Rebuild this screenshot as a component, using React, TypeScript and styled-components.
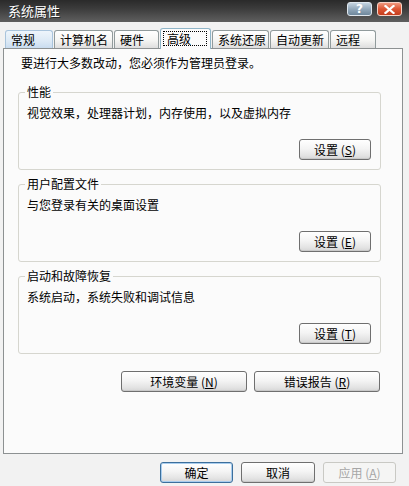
import * as React from "react";
import styled, { createGlobalStyle } from "styled-components";

const GlobalStyle = createGlobalStyle`
  html, body {
    margin: 0;
    padding: 0;
    background: #f2f2f2;
  }
  body {
    font-family: "Noto Sans CJK SC", "Noto Sans", sans-serif;
    font-size: 12px;
    color: #000;
  }
`;

const Window = styled.div`
  width: 409px;
  height: 486px;
  display: flex;
  flex-direction: column;
  background: #f2f2f2;
  overflow: hidden;
`;

const TitleBar = styled.div`
  height: 22px;
  flex: none;
  display: flex;
  align-items: center;
  padding: 0 7px 0 8px;
  background: linear-gradient(#2a2a2a, #3c3c3c 40%, #5f5f5f);
  color: #fff;
  font-size: 13px;
`;

const Title = styled.span`
  flex: 1;
  line-height: 22px;
  text-shadow: 1px 1px 0 rgba(0, 0, 0, 0.5);
`;

const CaptionButtons = styled.div`
  display: flex;
  gap: 5px;
  margin-top: -4px;
`;

const CaptionButton = styled.div<{ $close?: boolean }>`
  width: 25px;
  height: 14px;
  box-sizing: border-box;
  border-radius: 3px;
  border: 1px solid ${(p) => (p.$close ? "#f6d2c6" : "#dfe7ee")};
  background: ${(p) =>
    p.$close
      ? "linear-gradient(#f0997f, #dd5533 50%, #c43d1d)"
      : "linear-gradient(#c4d3df, #93a9bb 50%, #6f889c)"};
  display: flex;
  align-items: center;
  justify-content: center;
  color: #fff;
  font-family: "DejaVu Sans", sans-serif;
  font-weight: bold;
  font-size: 12px;
  line-height: 12px;
`;

const Body = styled.div`
  padding: 0 6px 0 3px;
  display: flex;
  flex-direction: column;
`;

const Tabs = styled.div`
  display: flex;
  align-items: flex-end;
  height: 21px;
  margin: 6px 0 -1px 2px;
  position: relative;
  z-index: 1;
`;

const Tab = styled.div<{ $w: number; $active?: boolean; $hot?: boolean }>`
  width: ${(p) => p.$w}px;
  box-sizing: border-box;
  height: ${(p) => (p.$active ? 21 : 18)}px;
  margin-bottom: ${(p) => (p.$active ? 0 : 1)}px;
  margin-right: 1px;
  padding: ${(p) => (p.$active ? "2px 3px 3px 2px" : "0 0 0 5px")};
  display: flex;
  align-items: center;
  border: 1px solid ${(p) => (p.$active ? "#8fb5c8" : p.$hot ? "#a9c4dc" : "#919b9c")};
  border-bottom: none;
  border-radius: 3px 3px 0 0;
  background: ${(p) =>
    p.$active
      ? "#fbfbfb"
      : p.$hot
      ? "linear-gradient(#eef5fb, #dce9f5 60%, #c9dcef)"
      : "linear-gradient(#ffffff, #f5f5f3 55%, #dedede)"};
  line-height: 14px;
  white-space: nowrap;
`;

const FocusLabel = styled.span`
  flex: 1;
  height: 100%;
  box-sizing: border-box;
  border: 1px dotted #000;
  padding-left: 3px;
  display: flex;
  align-items: center;
`;

const Panel = styled.div`
  width: 400px;
  height: 406px;
  box-sizing: border-box;
  border: 1px solid #8d9192;
  background: #fbfbfb;
  padding: 7px 21px 0 14px;
  display: flex;
  flex-direction: column;
`;

const Intro = styled.div`
  margin-left: 3px;
  line-height: 14px;
`;

const Group = styled.div<{ $first?: boolean }>`
  position: relative;
  height: 78px;
  flex: none;
  box-sizing: border-box;
  margin-top: ${(p) => (p.$first ? 22 : 14)}px;
  border: 1px solid #d6d6cf;
  border-radius: 3px;
  padding: 13px 9px 9px 8px;
  display: flex;
  flex-direction: column;
`;

const GroupLabel = styled.span`
  position: absolute;
  top: -8px;
  left: 6px;
  padding: 0 2px;
  background: #fbfbfb;
  line-height: 14px;
`;

const GroupText = styled.div`
  line-height: 14px;
`;

const GroupActions = styled.div`
  margin-top: auto;
  display: flex;
  justify-content: flex-end;
`;

const Button = styled.button<{ $w: number; $default?: boolean }>`
  width: ${(p) => p.$w}px;
  height: 21px;
  box-sizing: border-box;
  padding: 0;
  border: 1px solid ${(p) => (p.$default ? "#3c6f9c" : "#6f6f6f")};
  border-radius: 3px;
  background: linear-gradient(#ffffff, #f4f4f4 45%, #e4e4e4 80%, #d6d6d6);
  box-shadow: ${(p) => (p.$default ? "inset 0 0 0 1px #a9cdee" : "inset 0 -1px 0 #c9c9c9")};
  font-family: inherit;
  font-size: 12px;
  line-height: 14px;
  color: #000;

  &:disabled {
    border-color: #c9c9c4;
    background: #f5f5f4;
    box-shadow: none;
    color: #a6a6a6;
  }
`;

const EnvRow = styled.div`
  margin-top: 17px;
  display: flex;
  justify-content: flex-end;
  gap: 7px;
  padding-right: 1px;
`;

const Footer = styled.div`
  display: flex;
  justify-content: flex-end;
  gap: 8px;
  padding: 8px 7px 0 0;
`;

const CloseGlyph = () => (
  <svg width="11" height="9" viewBox="0 0 11 9">
    <path d="M1.5 1 L9.5 8 M9.5 1 L1.5 8" stroke="#fff" strokeWidth="2.2" strokeLinecap="square" />
  </svg>
);

const tabs = [
  { label: "常规", w: 48, hot: true },
  { label: "计算机名", w: 59 },
  { label: "硬件", w: 45 },
  { label: "高级", w: 51, active: true },
  { label: "系统还原", w: 57 },
  { label: "自动更新", w: 59 },
  { label: "远程", w: 46 },
];

const groups = [
  { title: "性能", text: "视觉效果，处理器计划，内存使用，以及虚拟内存", key: "S" },
  { title: "用户配置文件", text: "与您登录有关的桌面设置", key: "E" },
  { title: "启动和故障恢复", text: "系统启动，系统失败和调试信息", key: "T" },
];

const App: React.FunctionComponent = () => {
  return (
    <Window>
      <GlobalStyle />
      <TitleBar>
        <Title>系统属性</Title>
        <CaptionButtons>
          <CaptionButton>?</CaptionButton>
          <CaptionButton $close>
            <CloseGlyph />
          </CaptionButton>
        </CaptionButtons>
      </TitleBar>
      <Body>
        <Tabs>
          {tabs.map((t) => (
            <Tab key={t.label} $w={t.w} $active={t.active} $hot={t.hot}>
              {t.active ? <FocusLabel>{t.label}</FocusLabel> : t.label}
            </Tab>
          ))}
        </Tabs>
        <Panel>
          <Intro>要进行大多数改动，您必须作为管理员登录。</Intro>
          {groups.map((g, i) => (
            <Group key={g.title} $first={i === 0}>
              <GroupLabel>{g.title}</GroupLabel>
              <GroupText>{g.text}</GroupText>
              <GroupActions>
                <Button $w={72}>
                  设置 (<u>{g.key}</u>)
                </Button>
              </GroupActions>
            </Group>
          ))}
          <EnvRow>
            <Button $w={126}>
              环境变量 (<u>N</u>)
            </Button>
            <Button $w={126}>
              错误报告 (<u>R</u>)
            </Button>
          </EnvRow>
        </Panel>
        <Footer>
          <Button $w={73} $default>
            确定
          </Button>
          <Button $w={74}>取消</Button>
          <Button $w={73} disabled>
            应用 (<u>A</u>)
          </Button>
        </Footer>
      </Body>
    </Window>
  );
};

export default App;
